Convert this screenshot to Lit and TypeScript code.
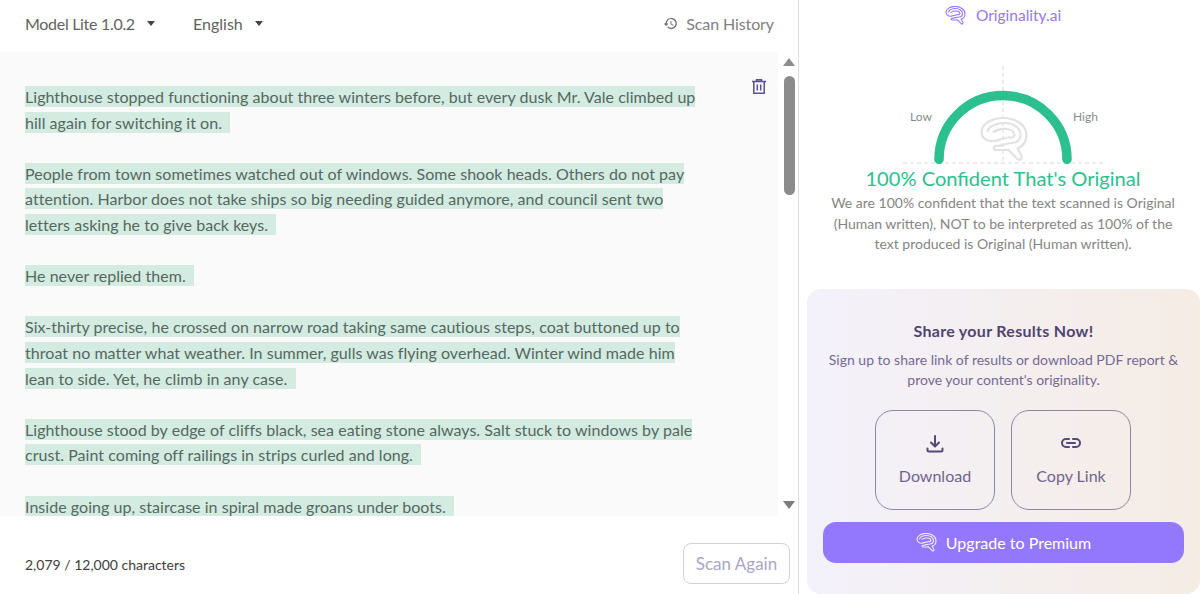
import { LitElement, html, css, svg } from "lit";
import { customElement } from "lit/decorators.js";

const brain = svg`
  <path d="M29 33L38 42C40 44 43 42 42 39L38 31C43 30 47 25 47 18C47 8 36 1 24 1C12 1 2 7 2 15C2 21 8 25 15 24C19 23.500 22 21 27 21"/>
  <path d="M8 14C10 9 17 6 25 6C34 6 41 11 41 18C41 23 37 26 33 26C28 26 22 29 17 29C14 29 13 32 16 33L29 33"/>
  <path d="M14 15C20 11 34 10 35 18C35 21 31 21 29 20"/>`;

const LINES: string[][] = [
  ["Lighthouse stopped functioning about three winters before, but every dusk Mr. Vale climbed up", "hill again for switching it on. \u00a0"],
  ["People from town sometimes watched out of windows. Some shook heads. Others do not pay", "attention. Harbor does not take ships so big needing guided anymore, and council sent two", "letters asking he to give back keys. \u00a0"],
  ["He never replied them. \u00a0"],
  ["Six-thirty precise, he crossed on narrow road taking same cautious steps, coat buttoned up to", "throat no matter what weather. In summer, gulls was flying overhead. Winter wind made him", "lean to side. Yet, he climb in any case. \u00a0"],
  ["Lighthouse stood by edge of cliffs black, sea eating stone always. Salt stuck to windows by pale", "crust. Paint coming off railings in strips curled and long. \u00a0"],
  ["Inside going up, staircase in spiral made groans under boots. \u00a0"],
];

@customElement("app-root")
export class AppRoot extends LitElement {
  static styles = css`
    :host {
      display: block;
      width: 1200px;
      height: 594px;
      overflow: hidden;
      background: #fff;
      font-family: "Lato", "Liberation Sans", sans-serif;
    }
    .page { display: flex; height: 594px; }
    .left {
      width: 798px;
      flex: none;
      display: flex;
      flex-direction: column;
      border-right: 1px solid #dcdce2;
    }
    .head {
      height: 52px;
      flex: none;
      display: flex;
      align-items: center;
      padding: 0 24px 5px 25px;
      box-sizing: border-box;
      font-size: 16px;
      color: #626262;
    }
    .select { display: flex; align-items: center; }
    .select.one { width: 168px; letter-spacing: -0.3px; }
    .caret {
      width: 0;
      height: 0;
      border-left: 4.500px solid transparent;
      border-right: 4.500px solid transparent;
      border-top: 5px solid #444;
      margin-left: 12px;
    }
    .history { margin-left: auto; display: flex; align-items: center; gap: 8px; color: #808080; letter-spacing: -0.1px; }
    .history svg { width: 15px; height: 15px; fill: #6f6f6f; }
    .editor {
      height: 464px;
      flex: none;
      display: flex;
      background: #fafafa;
      position: relative;
      overflow: hidden;
    }
    .text {
      flex: 1;
      padding: 32px 0 0 25px;
      font-size: 16px;
      line-height: 25.600px;
      letter-spacing: 0.04px;
      color: #566862;
      overflow: hidden;
    }
    .para { margin: 0 0 25.600px; }
    .line { display: block; white-space: pre; }
    .line span { background: #d3ebe0; padding: 1px 0; }
    .trash {
      position: absolute;
      left: 752px;
      top: 27px;
      width: 14px;
      height: 15px;
      fill: none;
      stroke: #5b4e9a;
      stroke-width: 1.500;
    }
    .bar {
      box-sizing: border-box;
      width: 20px;
      padding: 0 1px 0 3px;
      flex: none;
      background: #fff;
      display: flex;
      flex-direction: column;
      align-items: center;
    }
    .arrow-up, .arrow-down {
      width: 0;
      height: 0;
      border-left: 6.500px solid transparent;
      border-right: 6.500px solid transparent;
    }
    .arrow-up { border-bottom: 8px solid #8c8c8c; margin-top: 6px; }
    .thumb { width: 11px; height: 119px; background: #8c8c8c; border-radius: 6px; margin-top: 10px; }
    .arrow-down { border-top: 8px solid #7c7c7c; margin-top: auto; margin-bottom: 7px; }
    .foot {
      flex: 1;
      display: flex;
      align-items: center;
      justify-content: space-between;
      padding: 18px 8px 0 25px;
      font-size: 14px;
      color: #3d3d3d;
    }
    .again {
      width: 107px;
      height: 41px;
      box-sizing: border-box;
      border: 1px solid #d2cfe0;
      border-radius: 8px;
      background: #fff;
      color: #aaa5c8;
      font: inherit;
      font-size: 17px;
      padding: 0;
      margin-bottom: 1px;
    }
    .right { flex: 1; display: flex; flex-direction: column; min-width: 0; }
    .top {
      box-sizing: border-box;
      padding-left: 7px;
      display: flex;
      flex-direction: column;
      align-items: center;
    }
    .logo {
      display: flex;
      align-items: center;
      gap: 10px;
      color: #9678f0;
      font-size: 15.500px;
      margin-top: 5px;
      height: 20px;
    }
    .logo svg, .up svg { fill: none; stroke: currentColor; stroke-width: 2.600; stroke-linejoin: round; stroke-linecap: round; }
    .logo svg { width: 21px; height: 19px; }
    .gauge { position: relative; width: 200px; height: 100px; margin-top: 40px; flex: none; }
    .gauge svg { display: block; width: 200px; height: 100px; }
    .low, .high { position: absolute; top: 44px; font-size: 12px; color: #8a8a8a; }
    .low { left: 7px; }
    .high { left: 170px; }
    h1 {
      margin: 0;
      font-size: 20.100px;
      font-weight: 400;
      line-height: 26px;
      color: #2cc08e;
      white-space: nowrap;
    }
    .desc {
      margin: 2px 0 0;
      font-size: 14px;
      line-height: 20.500px;
      color: #858585;
      text-align: center;
      width: 360px;
    }
    .card {
      box-sizing: border-box;
      width: 393px;
      height: 305px;
      margin-top: 34px;
      margin-left: 8px;
      border-radius: 14px;
      background: linear-gradient(90deg, #f3f1fb, #f5ece4);
      display: flex;
      flex-direction: column;
      align-items: center;
      padding-top: 33px;
    }
    h2 { margin: 0; font-size: 16px; line-height: 18px; font-weight: 700; color: #514472; letter-spacing: 0.3px; }
    .card p {
      margin: 10px 0 0;
      font-size: 14px;
      line-height: 20px;
      color: #756a95;
      text-align: center;
    }
    .btns { display: flex; gap: 16px; margin-top: 20px; margin-right: 1px; }
    .btn {
      box-sizing: border-box;
      width: 120px;
      height: 100px;
      border: 1px solid #8f86a6;
      border-radius: 18px;
      display: flex;
      flex-direction: column;
      align-items: center;
      gap: 11px;
      padding-top: 22px;
      font-size: 16px;
      color: #6f6490;
    }
    .btn svg { width: 22px; height: 22px; fill: none; stroke: #55497a; stroke-width: 2; stroke-linecap: round; stroke-linejoin: round; }
    .up {
      box-sizing: border-box;
      width: 361px;
      height: 41px;
      margin-top: 12px;
      border-radius: 13px;
      background: #9378fd;
      color: #fff;
      font-size: 16px;
      display: flex;
      align-items: center;
      justify-content: center;
      gap: 9px;
    }
    .up svg { width: 21px; height: 19px; opacity: .85; }
  `;

  render() {
    return html`
      <div class="page">
        <div class="left">
          <div class="head">
            <div class="select one">Model Lite 1.0.2<i class="caret"></i></div>
            <div class="select">English<i class="caret"></i></div>
            <div class="history">
              <svg viewBox="0 0 24 24"><path d="M13 3a9 9 0 0 0-9 9H1l3.900 3.900L9 12H6a7 7 0 1 1 2.100 4.900l-1.400 1.400A9 9 0 1 0 13 3Zm-1 5v5l4.300 2.500.7-1.200-3.500-2.100V8Z"/></svg>
              Scan History
            </div>
          </div>
          <div class="editor">
            <div class="text">
              ${LINES.map(
                (p) => html`<div class="para">${p.map((l) => html`<div class="line"><span>${l}</span></div>`)}</div>`
              )}
            </div>
            <svg class="trash" viewBox="0 0 14 15">
              <path d="M0 2.500H14M4.500 2.500V.8H9.500V2.500M1.800 2.500V14.200H12.200V2.500M5.300 5.500V11.500M8.700 5.500V11.500"/>
            </svg>
            <div class="bar">
              <i class="arrow-up"></i>
              <i class="thumb"></i>
              <i class="arrow-down"></i>
            </div>
          </div>
          <div class="foot">
            <span>2,079 / 12,000 characters</span>
            <button class="again">Scan Again</button>
          </div>
        </div>
        <div class="right">
          <div class="top">
            <div class="logo"><svg viewBox="0 0 49 45">${brain}</svg>Originality.ai</div>
            <div class="gauge">
              <svg viewBox="0 0 200 100">
                <path d="M100 1V98M0 98H200" stroke="#d9d9d9" stroke-width="1" stroke-dasharray="4 3" fill="none"/>
                <g transform="translate(76.500 52)" fill="none" stroke="#e2e2e2" stroke-width="2.200" stroke-linejoin="round" stroke-linecap="round">${brain}</g>
                <path d="M36 94.500A64 64 0 0 1 164 94.500" stroke="#2cc08e" stroke-width="9.500" stroke-linecap="round" fill="none"/>
              </svg>
              <span class="low">Low</span><span class="high">High</span>
            </div>
            <h1>100% Confident That's Original</h1>
            <p class="desc">We are 100% confident that the text scanned is Original (Human written), NOT to be interpreted as 100% of the text produced is Original (Human written).</p>
          </div>
          <div class="card">
            <h2>Share your Results Now!</h2>
            <p>Sign up to share link of results or download PDF report &amp;<br />prove your content's originality.</p>
            <div class="btns">
              <div class="btn">
                <svg viewBox="0 0 22 22"><path d="M11 3V13M7 9.500L11 13.500L15 9.500M3.500 15.500V17C3.500 18 4 18.500 5 18.500H17C18 18.500 18.500 18 18.500 17V15.500"/></svg>
                Download
              </div>
              <div class="btn">
                <svg viewBox="0 0 22 22"><path d="M9 6H6A4 4 0 0 0 6 14H9M13 6H16A4 4 0 0 1 16 14H13M7 10H15"/></svg>
                Copy Link
              </div>
            </div>
            <div class="up"><svg viewBox="0 0 49 45">${brain}</svg>Upgrade to Premium</div>
          </div>
        </div>
      </div>
    `;
  }
}
